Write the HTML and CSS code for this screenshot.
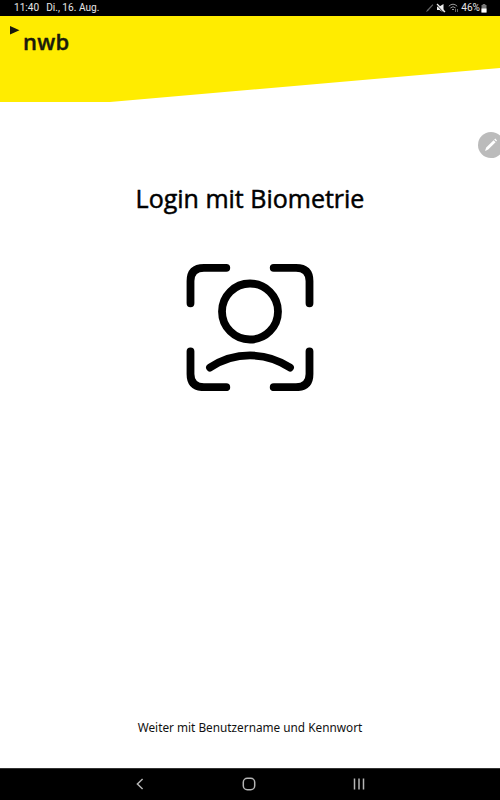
FILE: index.html
```html
<!DOCTYPE html>
<html lang="de">
<head>
  <meta charset="UTF-8" />
  <meta name="viewport" content="width=device-width, initial-scale=1.0" />
  <title>nwb Login</title>
  <link rel="stylesheet" href="styles.css">
</head>
<body>
  <div class="statusbar">
    <span class="time">11:40</span>
    <span class="date">Di., 16. Aug.</span>
    <div class="status-icons">
      <svg width="9" height="10" viewBox="0 0 9 10"><path d="M1 9L2 7L7.5 1.2L8.3 2L3 8Z" fill="#666"/></svg>
      <svg class="mute" width="10" height="10" viewBox="0 0 10 10"><path d="M1 3.5H3.5L7.5 1V9.5L3.5 7H1Z" fill="#eee"/><path d="M.5 1.8L8 9.8" stroke="#000"/><path d="M1 1L9 9" stroke="#eee" stroke-width="1.2"/></svg>
      <svg class="wifi" width="11" height="10" viewBox="0 0 11 10" fill="none" stroke="#999"><path d="M.8 3.2Q5 -.8 9.2 3.2M2.4 5Q5 2.4 7.6 5M4 6.7Q5 5.8 6 6.7"/><path d="M7.5 6V9M9.5 6V9" stroke="#666"/></svg>
      <span class="percent">46%</span>
      <svg width="6" height="9" viewBox="0 0 6 9"><path d="M1.7 0H4.3V1H5.5V8.5H.5V1H1.7Z" fill="#777"/><path d="M.5 4.5H5.5V8.5H.5Z" fill="#fff"/></svg>
    </div>
  </div>

  <header class="header">
    <svg class="flag" width="10" height="9" viewBox="0 0 10 9"><path d="M0 0L9.5 4.2L0 8.5Z" fill="#1a1a0c"/></svg>
    <div class="logo">nwb</div>
  </header>

  <main class="content">
    <h1>Login mit Biometrie</h1>
    <svg class="face" width="128" height="128" viewBox="0 0 128 128">
      <path d="M40.3 4.8H18Q4.5 4.8 4.5 18V40.3M87.7 4.8H110Q123.5 4.8 123.5 18V40.3M4.5 88.3V111Q4.5 124.2 18 124.2H40.3M123.5 88.3V111Q123.5 124.2 110 124.2H87.7"/>
      <circle cx="64" cy="48.5" r="28"/>
      <path d="M24 104.6A72 72 0 0 1 104 104.6"/>
    </svg>
    <a class="fallback">Weiter mit Benutzername und Kennwort</a>
  </main>

  <!-- floating pen button, cut off by the screen edge -->
  <div class="pen">
    <svg width="26" height="26" viewBox="0 0 26 26"><path d="M7 19L8.2 15.4L15.6 8.2L17.6 10.2L10.2 17.5Z M16.2 7.6L17.3 6.6L19 8.4L18.2 9.5Z" fill="#fff"/></svg>
  </div>

  <nav class="navbar">
    <svg width="8" height="12" viewBox="0 0 8 12"><path d="M6.6 1L1.4 6L6.6 11"/></svg>
    <svg width="14" height="14" viewBox="0 0 14 14"><rect x="1.3" y="1.3" width="11.4" height="11.4" rx="4"/></svg>
    <svg width="12" height="12" viewBox="0 0 12 12"><path d="M1.5 .5V11.5M6 .5V11.5M10.5 .5V11.5"/></svg>
  </nav>
</body>
</html>
```

FILE: styles.css
```css
* {
  box-sizing: border-box;
}
body {
  margin: 0;
  height: 800px;
  display: flex;
  flex-direction: column;
  position: relative;
  overflow: hidden;
  background: #fff;
  color: #000;
  font-family: "Open Sans", sans-serif;
}
svg {
  display: block;
}
.statusbar {
  height: 16px;
  display: flex;
  align-items: center;
  padding: 0 13px 0 14px;
  background: #000;
  color: #e6e6e6;
  font: 400 10.1px/16px Roboto, sans-serif;
}
.date {
  margin-left: 7px;
}
.status-icons {
  margin-left: auto;
  display: flex;
  align-items: center;
}
.mute {
  margin-left: 2px;
}
.wifi {
  margin-left: 2px;
}
.percent {
  margin: 0 1px 0 2px;
}
.header {
  height: 86px;
  padding: 10px 10px 0;
  background: #ffec00;
  clip-path: polygon(0 0, 100% 0, 100% 52px, 110px 100%, 0 100%);
}
.logo {
  margin: -7px 0 0 13px;
  color: #1a1a0c;
  font-size: 22px;
  font-weight: 600;
  line-height: 26px;
  letter-spacing: 0.3px;
  -webkit-text-stroke: 0.4px #1a1a0c;
}
.content {
  flex: 1;
  display: flex;
  flex-direction: column;
  align-items: center;
}
h1 {
  margin: 80px 0 0;
  font-size: 25px;
  font-weight: 400;
  line-height: 32px;
  -webkit-text-stroke: 0.5px #000;
}
.face {
  margin-top: 49px;
  fill: none;
  stroke: #000;
  stroke-width: 7.8;
  stroke-linecap: round;
}
.fallback {
  margin: auto 0 31px;
  font-family: "Noto Sans", "Open Sans", sans-serif;
  font-size: 11.8px;
  line-height: 20px;
  color: #111;
}
.pen {
  position: absolute;
  top: 132px;
  right: -4px;
  width: 26px;
  height: 26px;
  border-radius: 50%;
  background: #bbb;
}
.navbar {
  height: 32px;
  display: flex;
  align-items: center;
  justify-content: space-between;
  padding: 0 135px 2px 136px;
  background: #000;
  border-top: 1px solid #333;
  fill: none;
  stroke: #b5b5b5;
  stroke-width: 1.5;
}
```
